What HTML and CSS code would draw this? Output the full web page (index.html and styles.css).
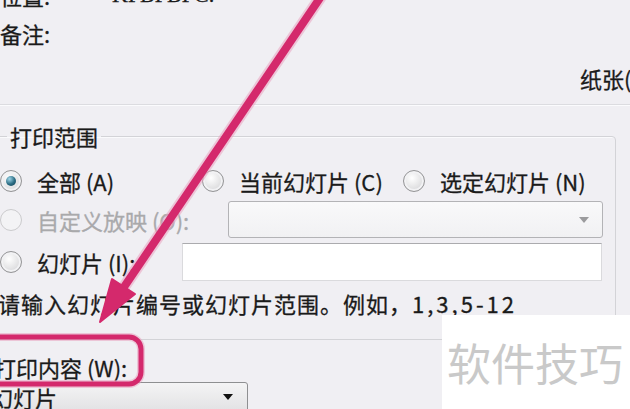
FILE: index.html
```html
<!DOCTYPE html>
<html lang="zh-CN">
<head>
  <meta charset="UTF-8" />
  <title>打印</title>
  <link rel="stylesheet" href="styles.css">
</head>
<body>
  <div class="page">
    <section class="info">
      <div class="info-row"><span class="info-label">位置:</span><span class="info-value">KPBPBPC:</span></div>
      <div class="info-row"><span class="info-label">备注:</span></div>
      <div class="info-row paper">纸张(Z)</div>
    </section>
    <div class="sep"></div>

    <fieldset class="group">
      <legend>打印范围</legend>
      <div class="row">
        <label class="opt opt-all"><span class="radio on"></span>全部 (A)</label>
        <label class="opt opt-cur"><span class="radio"></span>当前幻灯片 (C)</label>
        <label class="opt"><span class="radio"></span>选定幻灯片 (N)</label>
      </div>
      <div class="row">
        <label class="opt opt-custom disabled"><span class="radio"></span>自定义放映 (O):</label>
        <div class="combo"><span class="combo-arrow"></span></div>
      </div>
      <div class="row row-slides">
        <label class="opt opt-slides"><span class="radio"></span>幻灯片 (I):</label>
        <div class="field"></div>
      </div>
      <p class="hint">请输入幻灯片编号或幻灯片范围。例如，<span class="nums">1,3,5-12</span></p>
    </fieldset>

    <div class="content-label">打印内容 (W):</div>
    <div class="select"><span>幻灯片</span><span class="select-arrow"></span></div>

    <!-- annotation drawn over the dialog -->
    <svg class="marks" width="630" height="409" viewBox="0 0 630 409">
      <g stroke="#e9a3bf" stroke-opacity="0.55" fill="none">
        <line x1="322" y1="-5" x2="122" y2="290" stroke-width="12"/>
        <rect x="-20" y="337" width="161" height="47" rx="12" stroke-width="8"/>
      </g>
      <g stroke="#d4296c" fill="#d4296c">
        <line x1="322" y1="-5" x2="122" y2="290" stroke-width="8" stroke-linecap="round"/>
        <polygon points="100,322 135,294 112,279" stroke-width="2" stroke-linejoin="round"/>
        <rect x="-20" y="337" width="161" height="47" rx="12" fill="none" stroke-width="5"/>
      </g>
    </svg>

    <div class="watermark">软件技巧</div>
  </div>
</body>
</html>
```

FILE: styles.css
```css
html, body {
  margin: 0;
  padding: 0;
}
.page {
  position: relative;
  width: 630px;
  height: 409px;
  overflow: hidden;
  background: #f0eff3;
  color: #1a1a1a;
  font-family: "Noto Sans CJK SC", "Noto Sans", sans-serif;
  font-size: 22px;
  -webkit-text-stroke: 0.3px currentColor;
}
.info {
  margin-top: -23px;
}
.info-row {
  display: flex;
  height: 36px;
  line-height: 36px;
  white-space: nowrap;
}
.info-row + .info-row {
  margin-top: 2px;
}
.info-label {
  width: 112px;
}
.info-value {
  font-family: "Liberation Serif", serif;
}
.info-row.paper {
  margin-top: 9px;
  padding-left: 580px;
}
.sep {
  margin-top: 8px;
  border-top: 1px solid #dcdce0;
  border-bottom: 1px solid #fbfbfd;
}
.group {
  box-sizing: border-box;
  width: 626px;
  min-width: 0;
  margin: 15px 0 0 -10px;
  padding: 0 0 21px 10px;
  border: 1px solid #d3d3d7;
  border-radius: 4px;
  box-shadow: inset 1px 1px 0 #fafafc;
}
.group legend {
  margin-left: 6px;
  padding: 0 3px;
  line-height: 30px;
}
.row {
  display: flex;
  align-items: center;
  height: 39px;
  margin-left: -1px;
}
.row:first-of-type {
  margin-top: 10px;
}
.row-slides {
  height: 40px;
  margin-top: 3px;
}
.opt {
  display: flex;
  align-items: center;
  gap: 15px;
  white-space: nowrap;
}
.opt-all {
  width: 202px;
}
.opt-cur {
  width: 201px;
}
.opt-custom {
  width: 228px;
}
.opt-slides {
  width: 182px;
}
.disabled {
  color: #a9a9ab;
}
.radio {
  position: relative;
  box-sizing: border-box;
  width: 22px;
  height: 22px;
  flex: none;
  border-radius: 50%;
  border: 1px solid #959597;
  background: radial-gradient(circle at 40% 35%, #ffffff, #d9d9db 75%);
  box-shadow: inset 0 0 0 2px #f2f2f4;
}
.radio.on::after {
  content: "";
  position: absolute;
  left: 5px;
  top: 5px;
  width: 10px;
  height: 10px;
  border-radius: 50%;
  background: radial-gradient(circle at 35% 30%, #9fd6e8, #2a6b82 55%, #153f50);
}
.disabled .radio {
  border-color: #cbcbcd;
  background: #f3f3f5;
  box-shadow: none;
}
.combo {
  box-sizing: border-box;
  width: 375px;
  height: 37px;
  display: flex;
  align-items: center;
  justify-content: flex-end;
  padding-right: 13px;
  border: 1px solid #b3b3b6;
  border-radius: 3px;
  background: linear-gradient(#f9f9fa, #f1f1f3);
}
.combo-arrow {
  border-left: 5px solid transparent;
  border-right: 5px solid transparent;
  border-top: 6px solid #9b9b9d;
}
.field {
  box-sizing: border-box;
  width: 420px;
  height: 38px;
  background: #fff;
  border: 1px solid #dadadd;
  border-top-color: #ababae;
}
.hint {
  margin: 6px 0 0 -3px;
  height: 30px;
  line-height: 30px;
  letter-spacing: 1px;
  white-space: nowrap;
}
.nums {
  letter-spacing: 3px;
}
.content-label {
  margin: 12px 0 0 -6px;
  line-height: 30px;
  white-space: nowrap;
}
.select {
  box-sizing: border-box;
  width: 260px;
  height: 30px;
  margin-left: -12px;
  padding: 0 14px 0 2px;
  display: flex;
  align-items: center;
  justify-content: space-between;
  border: 1px solid #8e8f91;
  border-radius: 3px;
  background: linear-gradient(#f4f4f5, #e2e2e4);
  line-height: 28px;
}
.select-arrow {
  border-left: 5px solid transparent;
  border-right: 5px solid transparent;
  border-top: 6px solid #111;
}
.marks {
  position: absolute;
  left: 0;
  top: 0;
  pointer-events: none;
}
.watermark {
  position: absolute;
  left: 442px;
  top: 315px;
  width: 188px;
  height: 94px;
  box-sizing: border-box;
  padding-left: 5px;
  display: flex;
  align-items: center;
  background: #fff;
  color: #c9c9c9;
  font-size: 44px;
  white-space: nowrap;
  -webkit-text-stroke: 0;
}
```
